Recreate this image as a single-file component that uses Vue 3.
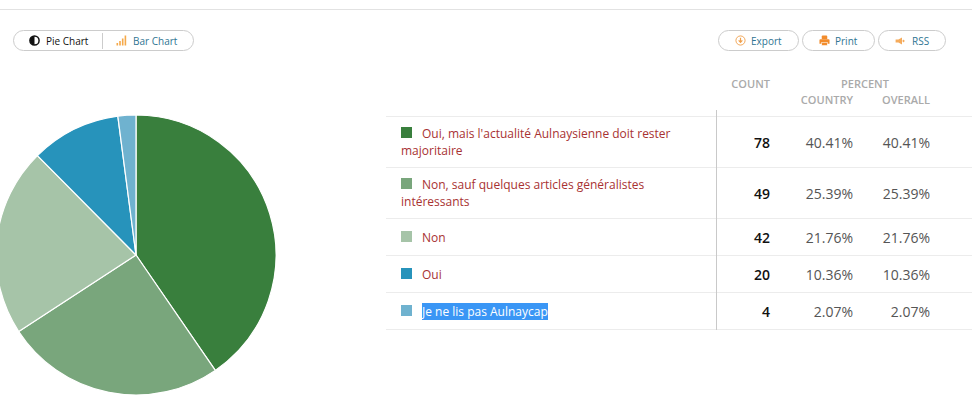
<script setup>
const cx = 136, cy = 255, r = 140
const data = [
  { label: "Oui, mais l'actualité Aulnaysienne doit rester majoritaire", count: 78, pct: '40.41%', color: '#397f3d', tall: true },
  { label: 'Non, sauf quelques articles généralistes intéressants', count: 49, pct: '25.39%', color: '#79a67c', tall: true },
  { label: 'Non', count: 42, pct: '21.76%', color: '#a6c4a8' },
  { label: 'Oui', count: 20, pct: '10.36%', color: '#2793bb' },
  { label: 'Je ne lis pas Aulnaycap', count: 4, pct: '2.07%', color: '#6fb2cf', selected: true }
]
const total = 193
let acc = 0
const slices = data.map((d) => {
  const a0 = (acc / total) * Math.PI * 2
  acc += d.count
  const a1 = (acc / total) * Math.PI * 2
  const pt = (a) => `${(cx + r * Math.sin(a)).toFixed(2)} ${(cy - r * Math.cos(a)).toFixed(2)}`
  const large = a1 - a0 > Math.PI ? 1 : 0
  return { color: d.color, d: `M${cx} ${cy}L${pt(a0)}A${r} ${r} 0 ${large} 1 ${pt(a1)}Z` }
})
</script>

<template>
  <div class="page">
    <div class="toolbar">
      <div class="switch">
        <span class="sw-item pie">
          <svg width="11" height="11" viewBox="0 0 11 11"><circle cx="5.5" cy="5.5" r="4.6" fill="#fff" stroke="#111" stroke-width="1.5"/><path d="M5.5 1a4.500 4.500 0 0 0 0 9z" fill="#111"/></svg>
          Pie Chart
        </span>
        <span class="sw-sep"></span>
        <span class="sw-item bar">
          <svg width="11" height="11" viewBox="0 0 11 11" fill="#f5a94a"><rect x="0.5" y="8" width="1.6" height="2.5"/><rect x="3.2" y="6" width="1.6" height="4.5"/><rect x="5.9" y="3.5" width="1.6" height="7"/><rect x="8.6" y="0.5" width="1.6" height="10"/></svg>
          Bar Chart
        </span>
      </div>
      <div class="actions">
        <span class="btn export">
          <svg width="11" height="11" viewBox="0 0 12 12" fill="none" stroke="#f0a04b"><circle cx="6" cy="6" r="5"/><path d="M6 3v4.500M4 5.800 6 8l2-2.200" stroke-width="1.3"/></svg>
          Export
        </span>
        <span class="btn print">
          <svg width="11" height="11" viewBox="0 0 12 12" fill="#f28c2c"><path d="M3 4.500V1.500q0-1 1-1h4q1 0 1 1v3z"/><path d="M0.500 5.500q0-1 1-1h9q1 0 1 1v4h-11z"/><rect x="3" y="8" width="6" height="3.500" stroke="#fff" stroke-width="0.6"/></svg>
          Print
        </span>
        <span class="btn rss">
          <svg width="10" height="8" viewBox="0 0 12 10" fill="#f5ab5c"><path d="M0.500 3h3.500L8.500 .5v9L4 7H0.500z"/><rect x="9.300" y="3.500" width="2.200" height="3" rx="1"/></svg>
          RSS
        </span>
      </div>
    </div>

    <div class="content">
      <div class="chart">
        <svg width="290" height="295" viewBox="0 110 290 295">
          <path v-for="s in slices" :key="s.color" :d="s.d" :fill="s.color" stroke="#fff" stroke-width="1.200" stroke-linejoin="round" />
        </svg>
      </div>

      <div class="results">
        <div class="head">
          <div class="h-count">COUNT</div>
          <div class="h-pct">
            <div class="h-pct-top">PERCENT</div>
            <div class="h-pct-sub"><span>COUNTRY</span><span>OVERALL</span></div>
          </div>
        </div>
        <div class="rows">
          <div v-for="d in data" :key="d.label" class="row" :class="{ tall: d.tall }">
            <div class="label">
              <i class="swatch" :style="{ background: d.color }"></i><span :class="{ sel: d.selected }">{{ d.label }}</span>
            </div>
            <div class="count">{{ d.count }}</div>
            <div class="pct">{{ d.pct }}</div>
            <div class="pct">{{ d.pct }}</div>
          </div>
        </div>
      </div>
    </div>
  </div>
</template>

<style scoped>
.page {
  width: 972px;
  height: 405px;
  overflow: hidden;
  background: #fff;
  font-family: "Open Sans", sans-serif;
  box-sizing: border-box;
  padding-top: 9px;
}
.toolbar {
  border-top: 1px solid #e2e2e2;
  display: flex;
  justify-content: space-between;
  padding: 20px 26px 0 13px;
  height: 67px;
  box-sizing: border-box;
}
.switch {
  display: flex;
  align-items: center;
  width: 181px;
  height: 21px;
  box-sizing: border-box;
  border: 1px solid #ccc;
  border-radius: 11px;
  font-size: 10px;
  padding-left: 15px;
}
.sw-item {
  display: flex;
  align-items: center;
  gap: 6px;
}
.pie { color: #111; width: 73px; }
.bar { color: #2f7593; margin-left: 13px; }
.sw-sep { width: 1px; height: 16px; background: #ccc; }
.actions { display: flex; gap: 3px; }
.btn {
  display: flex;
  align-items: center;
  height: 21px;
  box-sizing: border-box;
  border: 1px solid #ccc;
  border-radius: 11px;
  font-size: 10px;
  color: #2f7593;
  padding-left: 16px;
}
.export { width: 81px; gap: 5px; }
.print { width: 73px; gap: 5px; }
.rss { width: 68px; gap: 7px; }
.content {
  display: flex;
}
.chart {
  width: 386px;
  flex: none;
  margin-top: 34px;
}
.chart svg { display: block; }
.results { flex: 1; }
.head {
  display: grid;
  grid-template-columns: 384px 1fr;
  height: 40px;
  color: #aaa;
  font-size: 11px;
  font-weight: 600;
  line-height: 16px;
}
.h-count { text-align: right; }
.h-pct-top { text-align: center; width: 160px; padding-left: 30px; box-sizing: border-box; }
.h-pct-sub { display: flex; width: 160px; }
.h-pct-sub span:first-child { width: 83px; text-align: right; }
.h-pct-sub span:last-child { width: 77px; text-align: right; }
.rows {
  position: relative;
  border-top: 1px solid #ececec;
}
.rows::before {
  content: "";
  position: absolute;
  left: 330px;
  top: -7px;
  bottom: 0;
  width: 1px;
  background: #c9c9c9;
}
.row {
  display: grid;
  grid-template-columns: 318px 66px 83px 77px;
  align-items: center;
  min-height: 36px;
  border-bottom: 1px solid #ececec;
}
.row.tall { min-height: 50px; }
.label {
  padding-left: 15px;
  color: #a83232;
  line-height: 17px;
  font-size: 12px;
}
.swatch {
  display: inline-block;
  width: 11px;
  height: 11px;
  margin-right: 10px;
}
.sel { background: #3a96f5; color: #fff; }
.count { text-align: right; font-weight: 600; color: #111; font-size: 14px; }
.pct { text-align: right; color: #555; font-size: 14px; }
</style>
